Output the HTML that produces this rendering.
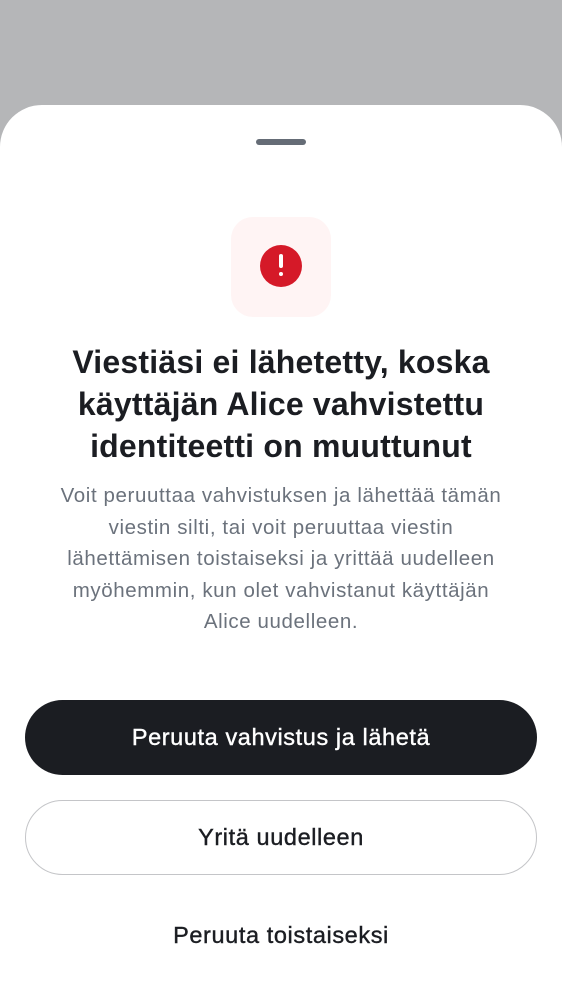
<!DOCTYPE html>
<html><head><meta charset="utf-8"><style>
*{margin:0;padding:0;box-sizing:border-box}
body{width:562px;height:1000px;background:#b5b6b8;font-family:"Liberation Sans",sans-serif;position:relative;overflow:hidden}
.sheet{position:absolute;left:0;top:105px;width:562px;height:895px;background:#fff;border-radius:42px 42px 0 0}
.handle{position:absolute;left:256px;top:139px;width:50px;height:6px;border-radius:3px;background:#656c76}
.ibox{position:absolute;left:231px;top:217px;width:100px;height:100px;border-radius:22px;background:#fff4f4}
.circ{position:absolute;left:260px;top:245px;width:42px;height:42px;border-radius:50%;background:#d51928}
.bar{position:absolute;left:279px;top:254px;width:4px;height:14px;border-radius:2px;background:#fff}
.dot{position:absolute;left:279px;top:272px;width:4px;height:4px;border-radius:2px;background:#fff}
h1{position:absolute;left:0;top:341px;width:562px;text-align:center;font-size:32px;line-height:42px;font-weight:bold;color:#1b1d22;letter-spacing:0.2px}
p{position:absolute;left:0;top:480px;width:562px;text-align:center;font-size:20.5px;line-height:31.5px;color:#6b727c;letter-spacing:0.6px;white-space:nowrap}
.b{position:absolute;left:25px;width:512px;height:75px;border-radius:38px;text-align:center;line-height:75px;font-size:23.5px;letter-spacing:0.6px;-webkit-text-stroke:0.4px currentColor}
.b1{top:700px;background:#1b1d22;color:#fff}
.b2{top:800px;border:1.5px solid #c4c5c8;color:#1b1d22;line-height:72px}
.t{position:absolute;left:0;width:562px;top:922px;text-align:center;font-size:23.5px;color:#1b1d22;letter-spacing:0.6px;-webkit-text-stroke:0.4px currentColor}
</style></head><body>
<div class="sheet"></div>
<div class="handle"></div>
<div class="ibox"></div><div class="circ"></div><div class="bar"></div><div class="dot"></div>
<h1>Viestiäsi ei lähetetty, koska<br>käyttäjän Alice vahvistettu<br>identiteetti on muuttunut</h1>
<p>Voit peruuttaa vahvistuksen ja lähettää tämän<br>viestin silti, tai voit peruuttaa viestin<br>lähettämisen toistaiseksi ja yrittää uudelleen<br>myöhemmin, kun olet vahvistanut käyttäjän<br>Alice uudelleen.</p>
<div class="b b1">Peruuta vahvistus ja lähetä</div>
<div class="b b2">Yritä uudelleen</div>
<div class="t">Peruuta toistaiseksi</div>
</body></html>
